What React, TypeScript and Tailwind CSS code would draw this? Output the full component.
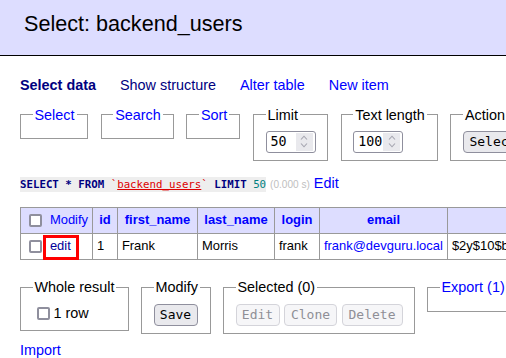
import type { ReactNode } from "react"

const mono = "font-['DejaVu_Sans_Mono',monospace]"

function Box({ legend, link, className, children }: { legend: string; link?: boolean; className: string; children?: ReactNode }) {
    return (
        <fieldset className={`min-w-0 shrink-0 border border-[#999] px-[11.5px] pt-[7.2px] pb-[7.2px] ${className}`}>
            <legend className={`px-[2px] leading-[18px] whitespace-nowrap ${link ? "text-[#00f]" : "text-black"}`}>{legend}</legend>
            {children}
        </fieldset>
    )
}

function Check({ className = "" }: { className?: string }) {
    return <span className={`inline-block h-[13px] w-[13px] shrink-0 rounded-[2px] border-2 border-[#8f8f9d] bg-white ${className}`} />
}

function NumInput({ value }: { value: string }) {
    return (
        <div className="flex h-[22px] w-[50px] items-stretch rounded-[3px] border border-[#8f8f9d] bg-white py-[1px] pr-[2px] pl-[4px]">
            <span className={`${mono} flex-1 text-[13.33px] leading-[18px]`}>{value}</span>
            <span className="flex w-[17px] flex-col items-center justify-center gap-[3px] bg-[#e9e9ed]">
                <svg width="8" height="5" viewBox="0 0 8 5">
                    <path d="M1 4.5 4 1.2 7 4.5" fill="none" stroke="#a5a5b0" strokeWidth="1.1" />
                </svg>
                <svg width="8" height="5" viewBox="0 0 8 5">
                    <path d="M1 0.5 4 3.8 7 0.5" fill="none" stroke="#a5a5b0" strokeWidth="1.1" />
                </svg>
            </span>
        </div>
    )
}

function Btn({ label, w, disabled }: { label: string; w: string; disabled?: boolean }) {
    return (
        <span
            className={`${mono} ${w} inline-block h-[22px] shrink-0 rounded-[4px] border text-center text-[13px] leading-[20px] ${
                disabled ? "border-[#d4d4da] bg-[#f6f6f8] text-[#8f8f96]" : "border-[#8f8f9d] bg-[#e9e9ed] text-black"
            }`}
        >
            {label}
        </span>
    )
}

export default function App() {
    return (
        <div className="h-[358px] w-[506px] overflow-hidden bg-white font-['Liberation_Sans',Arial,sans-serif] text-[14.4px] leading-[18px] text-black">
            <h2 className="h-[56px] border-b border-black bg-[#ddf] pt-[10px] pl-[24px] text-[21.6px] leading-[27px] font-normal">
                Select: backend_users
            </h2>

            <div className="pl-[20px]">
                <p className="mt-[20px] flex gap-[24px] whitespace-nowrap">
                    <a className="font-bold text-[#000080]">Select data</a>
                    <a className="text-[#000080]">Show structure</a>
                    <a className="text-[#00f]">Alter table</a>
                    <a className="text-[#00f]">New item</a>
                </p>

                {/* Query form */}
                <div className="mt-[11.5px] flex items-start gap-[12.7px]">
                    <Box legend="Select" link className="w-[68px]" />
                    <Box legend="Search" link className="w-[73px]" />
                    <Box legend="Sort" link className="w-[54px]" />
                    <Box legend="Limit" className="w-[75px]">
                        <NumInput value="50" />
                    </Box>
                    <Box legend="Text length" className="w-[97px]">
                        <NumInput value="100" />
                    </Box>
                    <Box legend="Action" className="w-[120px]">
                        <Btn label="Select" w="w-[60px]" />
                    </Box>
                </div>

                <p className="mt-[13px] whitespace-nowrap">
                    <code className={`${mono} inline-block h-[15px] bg-[#eee] text-[10.75px] leading-[15px]`}>
                        <b className="text-[#000080]">SELECT</b> <b className="text-[#000080]">*</b>{" "}
                        <b className="text-[#000080]">FROM</b> <span className="text-[#d00]">`</span>
                        <span className="text-[#d00] underline">backend_users</span>
                        <span className="text-[#d00]">`</span> <b className="text-[#000080]">LIMIT</b>{" "}
                        <span className="text-[#008080]">50</span>
                    </code>{" "}
                    <span className="text-[10.08px] text-[#c0c0c0]">(0.000 s)</span> <a className="text-[#00f]">Edit</a>
                </p>

                {/* Result table */}
                <table className="mt-[13px] w-[847px] table-fixed border-collapse text-[12.96px] leading-[16px]">
                    <colgroup>
                        <col className="w-[72px]" />
                        <col className="w-[25px]" />
                        <col className="w-[80px]" />
                        <col className="w-[77px]" />
                        <col className="w-[45px]" />
                        <col className="w-[128px]" />
                        <col className="w-[420px]" />
                    </colgroup>
                    <thead>
                        <tr className="h-[26px] bg-[#ddf]">
                            <td className="border border-[#999] px-[3.9px]">
                                <div className="flex items-center">
                                    <Check className="mr-[8px] ml-[4px]" />
                                    <a className="text-[#00f]">Modify</a>
                                </div>
                            </td>
                            <th className="border border-[#999] px-[4px] text-center font-bold text-[#00f]">id</th>
                            <th className="border border-[#999] px-[4px] text-center font-bold text-[#00f]">first_name</th>
                            <th className="border border-[#999] px-[4px] text-center font-bold text-[#00f]">last_name</th>
                            <th className="border border-[#999] px-[4px] text-center font-bold text-[#00f]">login</th>
                            <th className="border border-[#999] px-[4px] text-center font-bold text-[#00f]">email</th>
                            <th className="border border-[#999] px-[4px] text-center font-bold text-[#00f]">password</th>
                        </tr>
                    </thead>
                    <tbody>
                        <tr className="h-[26px]">
                            <td className="relative border border-[#999] px-[3.9px]">
                                <div className="flex items-center">
                                    <Check className="mr-[8px] ml-[4px]" />
                                    <a className="text-[#000099]">edit</a>
                                </div>
                                <span className="absolute top-[1.5px] left-[22px] h-[25px] w-[36px] border-[3px] border-[#f00]" />
                            </td>
                            <td className="border border-[#999] px-[3.9px]">1</td>
                            <td className="border border-[#999] px-[3.9px]">Frank</td>
                            <td className="border border-[#999] px-[3.9px]">Morris</td>
                            <td className="border border-[#999] px-[3.9px]">frank</td>
                            <td className="border border-[#999] px-[3.9px] whitespace-nowrap">
                                <a className="text-[#00f]">frank@devguru.local</a>
                            </td>
                            <td className="overflow-hidden border border-[#999] px-[3.9px] whitespace-nowrap">
                                $2y$10$bp5wBfbAN6lMYT27pJMomOGutDF2RKZKYZITAupZ3x8eAaYgN6EKK
                            </td>
                        </tr>
                    </tbody>
                </table>

                {/* Bulk actions */}
                <div className="mt-[18.5px] flex items-start gap-[12px]">
                    <Box legend="Whole result" className="w-[109px]">
                        <div className="flex h-[19.6px] items-center">
                            <Check className="mr-[4px] ml-[4px]" />
                            <span>1 row</span>
                        </div>
                    </Box>
                    <Box legend="Modify" className="w-[70px]">
                        <Btn label="Save" w="w-[44px]" />
                    </Box>
                    <Box legend="Selected (0)" className="w-[192px]">
                        <div className="flex gap-[4.5px]">
                            <Btn label="Edit" w="w-[44px]" disabled />
                            <Btn label="Clone" w="w-[53px]" disabled />
                            <Btn label="Delete" w="w-[61px]" disabled />
                        </div>
                    </Box>
                    <Box legend="Export (1)" link className="w-[110px]" />
                </div>

                <p className="mt-[7.5px]">
                    <a className="text-[#00f]">Import</a>
                </p>
            </div>
        </div>
    )
}
